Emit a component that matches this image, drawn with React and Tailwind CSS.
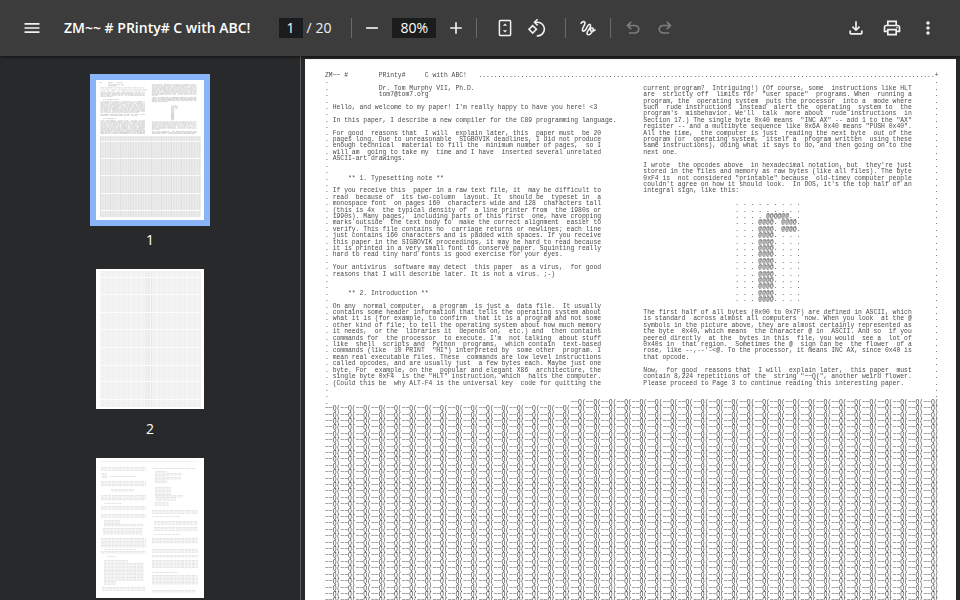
import { useState } from "react";
import {
  MdAdd,
  MdMenu,
  MdMoreVert,
  MdOutlinePrint,
  MdRemove,
} from "react-icons/md";

const COLS = 160;
const ROWS = 128;
const FLOWER = "~~Q(";

// first row and text of every block, left column of the paper
const leftBlocks = [
  [2, `            Dr. Tom Murphy VII, Ph.D.
            tom7@tom7.org`],
  [5, `Hello, and welcome to my paper! I'm really happy to have you here! <3`],
  [7, `In this paper, I describe a new compiler for the C89 programming language.`],
  [9, `For good  reasons that  I will  explain later, this  paper must  be 20
pages long. Due to unreasonable  SIGBOVIK deadlines, I did not produce
enough technical  material to fill the  minimum number of pages,  so I
will am  going to take my  time and I have  inserted several unrelated
ASCII-art drawings.`],
  [16, `    ** 1. Typesetting note **`],
  [18, `If you receive this  paper in a raw text file, it  may be difficult to
read  because of  its two-column  layout. It  should be  typeset in  a
monospace font  on pages 160  characters wide and 128  characters tall
(this is 4x  the typical density of  a line printer from  the 1980s or
1990s). Many pages,  including parts of this first  one, have cropping
marks outside  the text body to  make the correct alignment  easier to
verify. This file contains no  carriage returns or newlines; each line
just contains 160 characters and is padded with spaces. If you receive
this paper in the SIGBOVIK proceedings, it may be hard to read because
it is printed in a very small font to conserve paper. Squinting really
hard to read tiny hard fonts is good exercise for your eyes.`],
  [30, `Your antivirus  software may detect  this paper  as a virus,  for good
reasons that I will describe later. It is not a virus. ;-)`],
  [34, `    ** 2. Introduction **`],
  [36, `On any  normal computer,  a program  is just a  data file.  It usually
contains some header information that tells the operating system about
what it is (for example, to confirm  that it is a program and not some
other kind of file; to tell the operating system about how much memory
it needs,  or the  libraries it  depends on,  etc.) and  then contains
commands for  the processor  to execute. I'm  not talking  about stuff
like  shell  scripts and  Python  programs,  which contain  text-based
commands (like  10 PRINT  "HI") interpreted by  some other  program. I
mean real executable files. These  commands are low level instructions
called opcodes, and are usually just  a few bytes each. Maybe just one
byte. For  example, on the  popular and elegant X86  architecture, the
single byte 0xF4  is the "HLT" instruction, which  halts the computer.
(Could this be  why ALT-F4 is the universal key  code for quitting the`],
];

const rightBlocks = [
  [2, `current program?  Intriguing!) (Of course, some  instructions like HLT
are  strictly off  limits for  "user space"  programs. When  running a
program, the  operating system  puts the processor  into a  mode where
such  rude instructions  instead  alert the  operating  system to  the
program's  misbehavior. We'll  talk  more about  rude instructions  in
Section 17.) The single byte 0x40 means  "INC AX" -- add 1 to the "AX"
register -- and a multibyte sequence like 0x6A 0x40 means "PUSH 0x40".
All the time,  the computer is just  reading the next byte  out of the
program (or  operating system,  itself a  program written  using these
same instructions), doing what it says to do, and then going on to the
next one.`],
  [14, `I wrote  the opcodes above  in hexadecimal notation, but  they're just
stored in the files and memory as raw bytes (like all files). The byte
0xF4 is  not considered "printable" because  old-timey computer people
couldn't agree on how it should look.  In DOS, it's the top half of an
integral sign, like this:`],
  [37, `The first half of all bytes (0x00 to 0x7F) are defined in ASCII, which
is standard  across almost all computers  now. When you look  at the @
symbols in the picture above, they are almost certainly represented as
the byte  0x40, which means  the character @ in  ASCII. And so  if you
peered directly  at the  bytes in this  file, you would  see a  lot of
0x40s in  that region.  Sometimes the @  sign can be  the flower  of a
rose, like --,--'-<@. To the processor, it means INC AX, since 0x40 is
that opcode.`],
  [46, `Now,  for good  reasons that  I will  explain later,  this paper  must
contain 8,224 repetitions of the  string "~~Q(", another weird flower.
Please proceed to Page 3 to continue reading this interesting paper.`],
];

const integralSign = [
  ". . . . . . . . .",
  ". . . . . . . . .",
  ". . . . @@@@@@. .",
  ". . . @@@@. @@@@.",
  ". . . @@@@. @@@@.",
  ...Array(11).fill(". . . @@@@. . . ."),
];

function put(grid, row, col, text) {
  text.split("\n").forEach((line, i) => {
    for (let c = 0; c < line.length; c++) grid[row + i][col + c] = line[c];
  });
}

function buildPage() {
  const grid = Array.from({ length: ROWS }, () => Array(COLS).fill(" "));
  put(grid, 0, 0, "ZM~~ #        PRinty#     C with ABC!   " + ".".repeat(119) + "+");
  for (let r = 1; r < 52; r++) {
    grid[r][0] = ".";
    grid[r][COLS - 1] = ".";
  }
  leftBlocks.forEach(([row, text]) => put(grid, row, 2, text));
  rightBlocks.forEach(([row, text]) => put(grid, row, 83, text));
  put(grid, 20, 107, integralSign.join("\n"));
  put(grid, 51, 64, FLOWER.repeat(24));
  for (let r = 52; r < ROWS; r++) put(grid, r, 0, FLOWER.repeat(40));
  return grid.map((row) => row.join("").trimEnd());
}

const pageLines = buildPage();

// one stroke per word of the text, rows above the flower field
const wordStrokes = pageLines
  .slice(0, 51)
  .map((line, r) =>
    [...line.matchAll(/[^\s]{2,}/g)]
      .filter((m) => !m[0].startsWith("..."))
      .map((m) => `M${3.2 + m.index * 0.635} ${2.6 + r * 1.06}h${m[0].length * 0.635}`)
      .join("")
  )
  .join("");

// x, y, width, height of the text blocks on page three
const thirdPage = [
  [5, 9, 45, 3], [6, 15, 5, 5], [13, 18, 27, 1], [5, 23, 45, 5], [15, 31, 23, 2],
  [5, 37, 45, 5], [8, 45, 18, 1], [5, 48, 45, 4], [5, 56, 45, 4], [8, 62, 16, 3],
  [8, 66, 40, 2], [7, 70, 40, 7], [5, 80, 45, 9], [8, 91, 32, 1], [5, 93, 45, 2],
  [11, 98, 9, 1], [8, 102, 24, 2], [8, 105, 40, 18], [8, 123, 12, 3], [6, 129, 43, 4],
  [56, 10, 44, 1], [59, 13, 12, 12], [71, 15, 15, 2], [71, 19, 14, 2], [59, 29, 16, 8],
  [59, 37, 28, 2], [60, 39, 20, 3], [59, 44, 14, 4], [56, 52, 46, 4], [56, 58, 28, 1],
  [58, 63, 44, 4], [58, 69, 44, 4], [58, 76, 26, 1], [56, 80, 46, 5], [56, 91, 46, 3],
  [56, 97, 46, 2], [56, 102, 46, 8], [56, 114, 26, 1], [56, 117, 46, 9], [56, 132, 44, 2],
];

function ThumbOne() {
  return (
    <>
      <path d={wordStrokes} stroke="#c4c4c4" strokeWidth="0.7" />
      <rect x="4" y="56" width="101" height="81" fill="#ebebeb" />
      {Array.from({ length: 40 }, (_, i) => (
        <rect key={i} x={4 + i * 2.54} y="57" width="0.8" height="80" fill={i % 4 ? "#e2e2e2" : "#dadada"} />
      ))}
      <path d="M4 61.5h101M4 78.5h101M4 95.5h101M4 113.5h101M4 130.5h101" stroke="#fafafa" />
    </>
  );
}

function ThumbTwo() {
  return (
    <>
      <rect x="4" y="2" width="101" height="136" fill="#f3f3f3" />
      {Array.from({ length: 20 }, (_, i) => (
        <rect key={i} x={7 + i * 5.08} y="2" width="1" height="136" fill="#efefef" />
      ))}
      <path d="M50.5 2v136M52.5 2v136M55.5 2v136" stroke="#e6e6e6" strokeWidth="0.8" />
      <path d="M4 8.5h101M4 25.5h101M4 43.5h101M4 60.5h101M4 78.5h101M4 96.5h101M4 112.5h101M4 130.5h101" stroke="#fcfcfc" />
    </>
  );
}

function ThumbThree() {
  return (
    <>
      <path d="M4 3.5h98" stroke="#f3f3f3" />
      {thirdPage.map(([x, y, w, h]) =>
        Array.from({ length: Math.ceil(h / 1.4) }, (_, i) => (
          <path
            key={`${x}-${y}-${i}`}
            d={`M${x} ${y + 0.5 + i * 1.4}h${w}`}
            stroke="#e2e2e2"
            strokeWidth="0.9"
            strokeDasharray={i % 2 ? "3 0.7 2 0.6 4 0.7" : "2 0.6 4 0.7 3 0.6"}
          />
        ))
      )}
    </>
  );
}

const thumbs = [ThumbOne, ThumbTwo, ThumbThree];

function ToolButton({ label, children, ...rest }) {
  return (
    <button
      type="button"
      aria-label={label}
      title={label}
      className="flex size-8 shrink-0 items-center justify-center rounded-full text-xl hover:bg-white/10 disabled:text-[#7c7c7c]"
      {...rest}
    >
      {children}
    </button>
  );
}

function Divider({ className }) {
  return <div className={`h-5 w-px shrink-0 bg-[#6a6a6a] ${className}`} />;
}

function SymbolIcon({ d }) {
  return (
    <svg viewBox="0 -960 960 960" className="size-5" fill="currentColor">
      <path d={d} />
    </svg>
  );
}

function FitIcon() {
  return (
    <svg viewBox="0 0 20 20" className="size-5" fill="none" stroke="currentColor" strokeWidth="1.5">
      <rect x="4.4" y="2.6" width="11.2" height="14.8" rx="0.8" />
      <path d="M7.8 7.8 10 5.4l2.2 2.4zM7.8 12.2l2.2 2.4 2.2-2.4z" fill="currentColor" stroke="none" />
    </svg>
  );
}

function RotateIcon() {
  return (
    <svg viewBox="0 0 20 20" className="size-5" fill="none" stroke="currentColor" strokeWidth="1.6">
      <path d="M5.7 7.6 2 11.3 5.7 15l3.7-3.7z" />
      <path d="M8.2 4.3h2.4a6.8 6.8 0 0 1 0 13.6h-.8" />
      <path d="M10.6 1.2 7.5 4.3l3.1 3.1" />
    </svg>
  );
}

function DrawIcon() {
  return (
    <svg viewBox="0 0 20 20" className="size-5" fill="none" stroke="currentColor" strokeWidth="1.6" strokeLinecap="round">
      <path d="M3 5.2C4.5 3.2 7.2 2.9 7 5.2 6.8 7.5 4 9.8 4.4 12c.4 2 2.6 1.2 3.6-.8 1-1.8 1.6-4 3-4.6 1.6-.6 1.8 1 1.2 2.6-.8 2-3.4 4.4-3.2 6.2.2 1.6 2.2 1.8 3.6.4 1.4-1.4 3-3.4 2.6-5-.4-1.4-2.6-.8-2.8.8-.2 2 2.2 2.2 4.6.4" />
    </svg>
  );
}

function Toolbar({ page, setPage, zoom, setZoom }) {
  return (
    <header className="z-10 flex h-14 shrink-0 items-center bg-[#3c3c3c] px-4 text-[#f1f1f1] shadow-[0_1px_3px_rgba(0,0,0,0.6)]">
      <div className="flex min-w-0 flex-1 items-center gap-4">
        <ToolButton label="Menu">
          <MdMenu />
        </ToolButton>
        <h1 className="truncate text-sm font-semibold text-white">ZM~~ # PRinty# C with ABC!</h1>
      </div>
      <div className="flex items-center text-sm">
        <input
          aria-label="Page number"
          value={page}
          onChange={(e) => setPage(e.target.value)}
          className="h-5 w-6 bg-[#1b1c1d] text-center text-white outline-none"
        />
        <span className="ml-1 whitespace-nowrap">/ 20</span>
        <Divider className="ml-5 mr-1" />
        <ToolButton label="Zoom out" onClick={() => setZoom(Math.max(20, zoom - 10))}>
          <MdRemove />
        </ToolButton>
        <input
          aria-label="Zoom level"
          value={`${zoom}%`}
          readOnly
          className="mx-1 h-5 w-11 bg-[#1b1c1d] text-center text-white outline-none"
        />
        <ToolButton label="Zoom in" onClick={() => setZoom(Math.min(300, zoom + 10))}>
          <MdAdd />
        </ToolButton>
        <Divider className="ml-1 mr-3" />
        <ToolButton label="Fit to page">
          <FitIcon />
        </ToolButton>
        <ToolButton label="Rotate counterclockwise">
          <RotateIcon />
        </ToolButton>
        <Divider className="ml-3 mr-1.5" />
        <ToolButton label="Draw">
          <DrawIcon />
        </ToolButton>
        <Divider className="mx-1.5" />
        <ToolButton label="Undo" disabled>
          <SymbolIcon d="M280-200v-80h284q63 0 109.5-40T720-420q0-60-46.5-100T564-560H312l104 104-56 56-200-200 200-200 56 56-104 104h252q97 0 163.5 63T800-420q0 94-66.5 157T564-200H280Z" />
        </ToolButton>
        <ToolButton label="Redo" disabled>
          <SymbolIcon d="M396-200q-97 0-163.5-63T160-420q0-94 66.5-157T396-640h252L544-744l56-56 200 200-200 200-56-56 104-104H396q-63 0-109.5 40T240-420q0 60 46.5 100T396-280h284v80H396Z" />
        </ToolButton>
      </div>
      <div className="flex flex-1 items-center justify-end gap-1">
        <ToolButton label="Download">
          <SymbolIcon d="M480-320 280-520l56-58 104 104v-326h80v326l104-104 56 58-200 200ZM240-160q-33 0-56.5-23.5T160-240v-120h80v120h480v-120h80v120q0 33-23.5 56.5T720-160H240Z" />
        </ToolButton>
        <ToolButton label="Print">
          <MdOutlinePrint />
        </ToolButton>
        <ToolButton label="More actions">
          <MdMoreVert />
        </ToolButton>
      </div>
    </header>
  );
}

function Sidebar({ page, setPage }) {
  return (
    <nav className="flex w-[301px] shrink-0 flex-col items-center gap-[13px] overflow-hidden border-r border-[#5c5c5c] bg-[#28292a] pt-[18px]">
      {thumbs.map((Thumb, i) => (
        <button
          key={i}
          type="button"
          onClick={() => setPage(String(i + 1))}
          className="flex shrink-0 flex-col items-center gap-1 text-sm text-white"
        >
          <span className={`block p-1.5 ${page === String(i + 1) ? "bg-[#8ab4f8]" : ""}`}>
            <svg viewBox="0 0 108 140" className="h-[140px] w-[108px] bg-white">
              <Thumb />
            </svg>
          </span>
          <span>{i + 1}</span>
        </button>
      ))}
    </nav>
  );
}

export default function App() {
  const [page, setPage] = useState("1");
  const [zoom, setZoom] = useState(80);

  return (
    <div className="flex h-screen flex-col overflow-hidden bg-[#282828] font-['Open_Sans','Noto_Sans',sans-serif]">
      <Toolbar page={page} setPage={setPage} zoom={zoom} setZoom={setZoom} />
      <div className="flex min-h-0 flex-1">
        <Sidebar page={page} setPage={setPage} />
        <main className="flex min-w-0 flex-1 flex-col items-center overflow-hidden pt-[3px]">
          <div className="shrink-0 bg-white pt-[18px] pr-[21px] pb-4 pl-[25px]" style={{ zoom: zoom / 100 }}>
            <pre className="font-['Liberation_Mono',monospace] text-[8px] leading-[8px] text-[#4a4a4a] will-change-transform">
              {pageLines.join("\n")}
            </pre>
          </div>
        </main>
      </div>
    </div>
  );
}
